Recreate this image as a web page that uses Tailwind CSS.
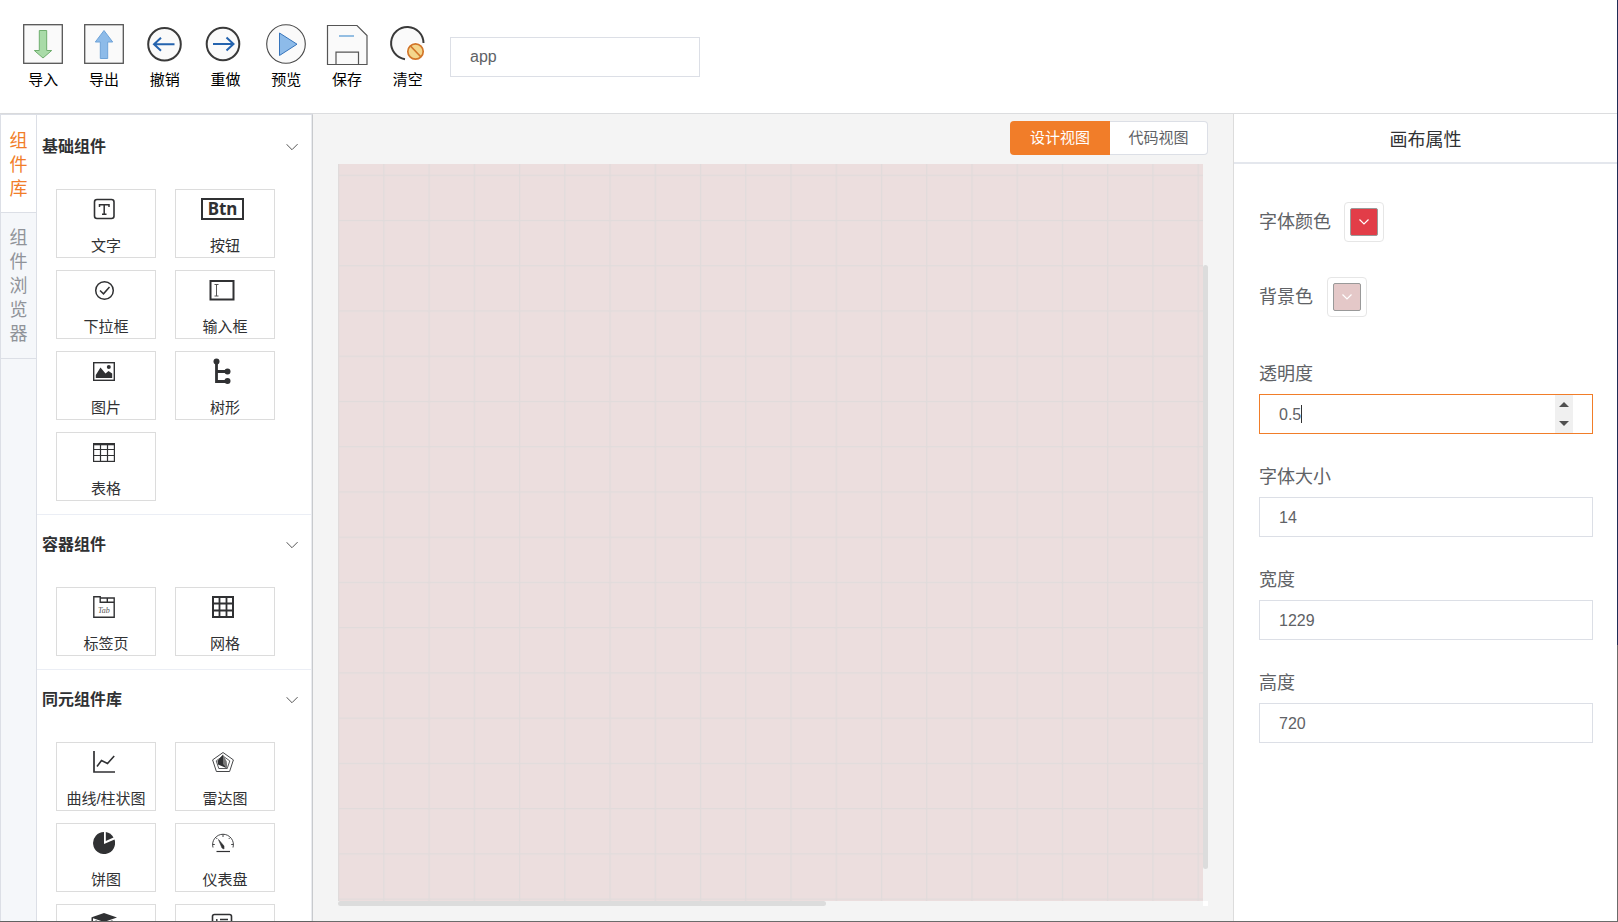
<!DOCTYPE html>
<html lang="zh-CN">
<head>
<meta charset="utf-8">
<meta name="viewport" content="width=device-width, initial-scale=1">
<title>app</title>
<script src="https://cdn.jsdelivr.net/npm/@tailwindcss/browser@4"></script>
</head>
<body class="h-screen overflow-hidden bg-[linear-gradient(#1f2d55_70%,#6b6b6b_70%)] pr-px pb-px font-['Liberation_Sans','Noto_Sans_CJK_SC',sans-serif] text-[#303133]">
<div class="flex h-full flex-col bg-white">

  <header class="flex h-[114px] shrink-0 items-start border-b border-[#dcdddf] pl-[13px]">
    <nav class="grid w-[425px] grid-cols-7 pt-6 text-[15px] leading-5 text-black" aria-label="工具栏">
      <button class="flex flex-col items-center gap-[6px]">
        <svg class="size-10" viewBox="0 0 40 40" fill="none"><rect x=".7" y=".7" width="38.6" height="38.6" fill="#fafafa" stroke="#555" stroke-width="1.3"/><path d="M16.3 6.5h7.4v20h5L20 34l-8.700-7.500h5z" fill="#a9dba8" stroke="#6fae6e"/></svg>
        导入
      </button>
      <button class="flex flex-col items-center gap-[6px]">
        <svg class="size-10" viewBox="0 0 40 40" fill="none"><rect x=".7" y=".7" width="38.6" height="38.6" fill="#fafafa" stroke="#555" stroke-width="1.3"/><path d="M16.300 34.500h7.400V18h5L20 6.500 11.300 18h5z" fill="#8dbbe9" stroke="#6ea3d8"/></svg>
        导出
      </button>
      <button class="flex flex-col items-center gap-[6px]">
        <svg class="size-10" viewBox="0 0 40 40" fill="none"><circle cx="19.500" cy="20.300" r="16.300" fill="#fafafa" stroke="#3a3a3a" stroke-width="2"/><path d="M29.500 20.300H9M16 13.800l-7 6.500 7 6.500" stroke="#2463ae" stroke-width="2"/></svg>
        撤销
      </button>
      <button class="flex flex-col items-center gap-[6px]">
        <svg class="size-10" viewBox="0 0 40 40" fill="none"><circle cx="18" cy="20" r="16.300" fill="#fafafa" stroke="#3a3a3a" stroke-width="2"/><path d="M8 20h20.500M21.500 13.500l7 6.500-7 6.500" stroke="#2463ae" stroke-width="2"/></svg>
        重做
      </button>
      <button class="flex flex-col items-center gap-[6px]">
        <svg class="size-10" viewBox="0 0 40 40" fill="none"><circle cx="20" cy="20" r="19.300" fill="#fafafa" stroke="#484848" stroke-width="1.100"/><path d="M13.500 9v22.500L31 20.200z" fill="#8dbbe9" stroke="#3674bb"/></svg>
        预览
      </button>
      <button class="flex flex-col items-center gap-[6px]">
        <svg class="size-10 overflow-visible" viewBox="0 0 40 40" fill="none"><path d="M.5 1.500h29.500l10 10v29H.5z" fill="#fafafa" stroke="#555" stroke-width="1.200"/><path d="M9 40V28.200h22.500V40" fill="#fafafa" stroke="#555" stroke-width="1.200"/><path d="M12 12H27" stroke="#88b7df" stroke-width="1.800"/></svg>
        保存
      </button>
      <button class="flex flex-col items-center gap-[6px]">
        <svg class="size-10" viewBox="0 0 40 40" fill="none"><circle cx="19.500" cy="19" r="16" fill="#fafafa"/><path d="M35.500 19A16.200 16.200 0 1 0 17 35.200" stroke="#3a3a3a" stroke-width="2"/><circle cx="27.500" cy="27.500" r="9.500" fill="#fff"/><circle cx="27.500" cy="27.500" r="7.700" fill="#f4d68c" stroke="#d2762a" stroke-width="1.700"/><path d="M22.500 22l10.500 11" stroke="#d2762a" stroke-width="1.700"/></svg>
        清空
      </button>
    </nav>
    <input aria-label="应用名称" value="app" class="mt-[37px] ml-3 h-10 w-[250px] border border-[#dcdfe6] px-[19px] text-base text-[#606266] outline-none">
  </header>

  <main class="flex min-h-0 flex-1">

    <aside class="flex w-[313px] shrink-0 border-x border-t border-[#dcdfe6] border-r-[#c8cacd] bg-white shadow-[0_2px_4px_rgba(0,0,0,0.12)]">
      <div class="flex w-9 shrink-0 flex-col border-r border-[#dcdfe6] bg-[#f5f7fa] text-lg leading-6" role="tablist">
        <button role="tab" aria-selected="true" class="border-b border-[#dcdfe6] bg-white px-2 pt-[14px] pb-[11px] text-[#f17d29]">组件库</button>
        <button role="tab" aria-selected="false" class="border-b border-[#dcdfe6] px-2 pt-[13px] pb-3 text-[#909399]">组件浏览器</button>
      </div>

      <div class="min-w-0 flex-1 overflow-hidden border-r border-[#e9ebef] text-[15px] leading-5">
        <section class="border-b border-[#ebeef5] pb-[13px]">
          <h2 class="pt-[2px]"><button class="flex h-[60px] w-full items-center justify-between pr-[13px] pl-[5px] text-base font-bold">基础组件
            <svg class="h-[7px] w-3" viewBox="0 0 12 7" fill="none" stroke="#555"><path d="M.4.1 6 5.700 11.600.1"/></svg></button></h2>
          <div class="grid grid-cols-[100px_100px] gap-x-[19px] gap-y-3 pt-3 pl-[19px]">
            <button class="flex h-[69px] flex-col items-center gap-4 border border-[#dcdcdc] pt-2">
              <svg class="mr-[5px] size-[22px] shrink-0" viewBox="0 0 22 22" fill="none" stroke="#303133"><rect x="1.500" y="1.500" width="19.500" height="19" rx="2.500" stroke-width="1.600"/><path d="M6.500 9V6.700h9.500V9M11.200 6.700v9.500M9 16.200h4.500" stroke-width="1.500"/></svg>文字</button>
            <button class="flex h-[69px] flex-col items-center gap-4 border border-[#dcdcdc] pt-2">
              <span class="mr-[5px] flex h-[22px] w-[43px] shrink-0 items-center justify-center border-2 border-[#303133] font-['Noto_Sans'] text-[17px] leading-4 font-bold">Btn</span>按钮</button>
            <button class="flex h-[69px] flex-col items-center gap-4 border border-[#dcdcdc] pt-2">
              <svg class="mr-[5px] size-[22px] shrink-0" viewBox="0 0 22 22" fill="none" stroke="#303133" stroke-width="1.500"><circle cx="11.500" cy="11.500" r="8.800"/><path d="M7 11.500l3.500 3.300 6-6.800"/></svg>下拉框</button>
            <button class="flex h-[69px] flex-col items-center gap-4 border border-[#dcdcdc] pt-2">
              <svg class="mr-[6px] h-[22px] w-[26px] shrink-0" viewBox="0 0 26 22" fill="none" stroke="#303133"><rect x="1.500" y="2" width="23" height="18.500" stroke-width="2"/><path d="M5.500 5.500h4M7.500 5.500v11.500M5.500 17h4" stroke="#555"/></svg>输入框</button>
            <button class="flex h-[69px] flex-col items-center gap-4 border border-[#dcdcdc] pt-2">
              <svg class="mr-[5px] size-[22px] shrink-0" viewBox="0 0 22 22" fill="#303133"><rect x=".7" y="2.700" width="20.600" height="17.600" fill="none" stroke="#303133" stroke-width="1.400"/><circle cx="15.800" cy="7" r="2"/><path d="M2.800 18v-3L7.500 7.500l5 6 3-2.500 3.700 2.500V18z"/></svg>图片</button>
            <button class="flex h-[69px] flex-col items-center gap-4 border border-[#dcdcdc] pt-2">
              <svg class="mr-[6px] size-[22px] shrink-0 overflow-visible" viewBox="0 0 22 22" fill="#303133"><path d="M5.500 1v20.500H16M5.500 11.500H16" fill="none" stroke="#303133" stroke-width="2.800"/><circle cx="5.500" cy="1.500" r="3"/><circle cx="16.500" cy="11.500" r="3"/><circle cx="16.500" cy="21" r="3"/></svg>树形</button>
            <button class="flex h-[69px] flex-col items-center gap-4 border border-[#dcdcdc] pt-2">
              <svg class="mr-[5px] size-[22px] shrink-0" viewBox="0 0 22 22" fill="none" stroke="#303133"><rect x=".6" y="2.600" width="20.800" height="17.800" stroke-width="1.200"/><path d="M0 3.200h22" stroke-width="2.200"/><path d="M1 8.500h20M1 14.500h20M7.500 3v17M14.500 3v17" stroke-width="1.200"/></svg>表格</button>
          </div>
        </section>

        <section class="border-b border-[#ebeef5] pb-[13px]">
          <h2><button class="flex h-[60px] w-full items-center justify-between pr-[13px] pl-[5px] text-base font-bold">容器组件
            <svg class="h-[7px] w-3" viewBox="0 0 12 7" fill="none" stroke="#555"><path d="M.4.1 6 5.700 11.600.1"/></svg></button></h2>
          <div class="grid grid-cols-[100px_100px] gap-x-[19px] gap-y-3 pt-3 pl-[19px]">
            <button class="flex h-[69px] flex-col items-center gap-4 border border-[#dcdcdc] pt-2">
              <svg class="mr-[5px] size-[22px] shrink-0" viewBox="0 0 22 22" fill="none" stroke="#303133"><path d="M.8.8h6.400v5.400h14v15H.8zM7.500 2h13.700v4.500M14.300 2v4" stroke-width="1.400"/><text x="5" y="17" font-family="Liberation Serif" font-style="italic" font-size="8" fill="#555" stroke="none">Tab</text></svg>标签页</button>
            <button class="flex h-[69px] flex-col items-center gap-4 border border-[#dcdcdc] pt-2">
              <svg class="mr-[5px] size-[22px] shrink-0" viewBox="0 0 22 22" fill="none" stroke="#303133"><rect x="1" y="1" width="20" height="20" stroke-width="2"/><path d="M1 7.500h20M1 14.500h20M7.500 1v20M14.500 1v20" stroke-width="1.800"/></svg>网格</button>
          </div>
        </section>

        <section>
          <h2><button class="flex h-[60px] w-full items-center justify-between pr-[13px] pl-[5px] text-base font-bold">同元组件库
            <svg class="h-[7px] w-3" viewBox="0 0 12 7" fill="none" stroke="#555"><path d="M.4.1 6 5.700 11.600.1"/></svg></button></h2>
          <div class="grid grid-cols-[100px_100px] gap-x-[19px] gap-y-3 pt-3 pl-[19px]">
            <button class="flex h-[69px] flex-col items-center gap-4 border border-[#dcdcdc] pt-2">
              <svg class="mr-[5px] size-[22px] shrink-0" viewBox="0 0 22 22" fill="none" stroke="#303133"><path d="M1 0v21h21" stroke-width="1.700"/><path d="M4 15.500l4.500-6 6 3L21.200 5" stroke-width="1.600"/></svg>曲线/柱状图</button>
            <button class="flex h-[69px] flex-col items-center gap-4 border border-[#dcdcdc] pt-2">
              <svg class="mr-[5px] size-[22px] shrink-0" viewBox="0 0 22 22" fill="none" stroke="#303133"><path d="M11 1.500l10.400 7.400L17.600 20.500H4.400L.6 8.900z" stroke-width=".9"/><path d="M11 5l6.800 4.900-2.600 7.600H6.800L4.200 9.900z" stroke-width=".8"/><path d="M11 3.500v9l4.500 5-9.500-4-.5-3.500z" fill="#303133"  stroke="none"/><path d="M11 3.500v9l4.500 5-.8-7z" fill="#777" stroke="none"/></svg>雷达图</button>
            <button class="flex h-[69px] flex-col items-center gap-4 border border-[#dcdcdc] pt-2">
              <svg class="mr-[5px] size-[22px] shrink-0" viewBox="0 0 22 22" fill="#303133"><path d="M11 0A11 11 0 1 0 21.500 7.500L11 12z"/><path d="M12.800 0A11 11 0 0 1 20.500 5.600L12.800 9z"/></svg>饼图</button>
            <button class="flex h-[69px] flex-col items-center gap-4 border border-[#dcdcdc] pt-2">
              <svg class="mr-[5px] size-[22px] shrink-0" viewBox="0 0 22 22" fill="none" stroke="#303133"><path d="M1 15.500A10.400 10.400 0 1 1 21 15.500M11 2.500V5M3.800 5.500l1.500 1.500M18.200 5.500l-1.500 1.500M.8 12.500h2M19.200 12.500h2" stroke-width=".9"/><path d="M6.500 7.500l5.500 6.500 0 3-2-1z" fill="#303133" stroke-width=".6"/><path d="M4.500 19.500h13.500" stroke-width="1.200"/></svg>仪表盘</button>
            <button aria-label="教学" class="flex h-[69px] flex-col items-center border border-[#dcdcdc] pt-2">
              <svg class="mr-[5px] h-[22px] w-[26px] shrink-0" viewBox="0 0 26 22" fill="#303133"><path d="M13 0l13 4.500-13 4.500L0 4.500z"/><path d="M4.500 7.200l8.500 3 8.500-3v7c-4 4-13 4-17 0zM.5 5h1.500v10H.5z"/></svg></button>
            <button aria-label="表单" class="flex h-[69px] flex-col items-center border border-[#dcdcdc] pt-2">
              <svg class="mr-[6px] size-[22px] shrink-0" viewBox="0 0 22 22" fill="none" stroke="#303133"><rect x="1.500" y="1.500" width="19" height="19.500" rx="2" stroke-width="1.600"/><path d="M5.800 6v11M9 6.500H17M9 9.500H17M9 13H17" stroke-width="1.400"/></svg></button>
          </div>
        </section>
      </div>
    </aside>

    <section class="flex min-w-0 flex-1 flex-col bg-[#f4f4f4] px-[25px] pt-[7px] pb-[15px]">
      <div class="flex h-[34px] shrink-0 self-end text-[15px]">
        <button class="w-[100px] rounded-l bg-[#f17d29] text-white">设计视图</button>
        <button class="w-[98px] rounded-r border border-l-0 border-[#dcdfe6] bg-white text-[#606266]">代码视图</button>
      </div>
      <div class="mt-[9px] grid min-h-0 flex-1 grid-cols-[1fr_5px] grid-rows-[1fr_5px]">
        <svg class="h-full w-full bg-[#ecdede]" aria-label="画布">
          <defs>
            <pattern id="major" width="45.240" height="45.240" y="10.700" patternUnits="userSpaceOnUse"><path d="M.6 0v45.240M0 .6h45.240" stroke="#dcdada" stroke-opacity=".7" stroke-width="1.200"/></pattern>
          </defs>
          <rect width="100%" height="100%" fill="url(#major)"/>
        </svg>
        <div class="flex flex-col pt-[101px] pb-8"><div class="flex-1 rounded-full bg-[#dcdcdc]"></div></div>
        <div class="flex"><div class="w-[488px] rounded-full bg-[#dcdcdc]"></div></div>
        <div class="bg-white"></div>
      </div>
    </section>

    <aside class="w-96 shrink-0 border-l border-[#dcdcdc] bg-white text-lg text-[#606266]">
      <h2 class="flex h-[50px] items-center justify-center border-b-2 border-[#e4e7ed] pt-[3px] text-[#303133]">画布属性</h2>
      <form class="pt-[38px] pr-6 pl-[25px]">
        <div class="flex h-10 items-center gap-[13px]">
          <span>字体颜色</span>
          <button type="button" aria-label="字体颜色" class="flex size-10 items-center justify-center rounded border border-[#e6e6e6]">
            <span class="flex size-7 items-center justify-center rounded-xs border border-[#999] bg-[#e23d48]"><svg class="h-[6px] w-[10px]" viewBox="0 0 10 6" fill="none" stroke="#fff" stroke-width="1.200"><path d="M.5.5 5 5 9.500.5"/></svg></span>
          </button>
        </div>
        <div class="mt-[35px] flex h-10 items-center gap-[14px]">
          <span>背景色</span>
          <button type="button" aria-label="背景色" class="flex size-10 items-center justify-center rounded border border-[#e6e6e6]">
            <span class="flex size-7 items-center justify-center rounded-xs border border-[#999] bg-[#e4c8c8]"><svg class="h-[6px] w-[10px]" viewBox="0 0 10 6" fill="none" stroke="#fff" stroke-width="1.200"><path d="M.5.5 5 5 9.500.5"/></svg></span>
          </button>
        </div>
        <div class="mt-[37px] flex flex-col gap-[23px]">
          <div>
            <label for="opacity" class="block leading-10">透明度</label>
            <div class="relative flex h-10 border border-[#f17d29]">
              <input id="opacity" value="0.5" class="min-w-0 flex-1 pt-px pl-[19px] text-base outline-none">
              <span class="absolute top-[10px] left-[41px] h-[18px] w-px bg-[#333]"></span>
              <div class="mr-[19px] flex w-[18px] flex-col bg-[#f0f0f0]">
                <button type="button" aria-label="增加" class="flex flex-1 items-center justify-center"><svg class="h-[5px] w-[10px]" viewBox="0 0 10 5"><path d="M0 5 5 0l5 5z" fill="#505050"/></svg></button>
                <button type="button" aria-label="减少" class="flex flex-1 items-center justify-center"><svg class="h-[5px] w-[10px]" viewBox="0 0 10 5"><path d="M0 0l5 5 5-5z" fill="#505050"/></svg></button>
              </div>
            </div>
          </div>
          <div>
            <label for="size" class="block leading-10">字体大小</label>
            <input id="size" value="14" class="block h-10 w-full border border-[#dcdfe6] px-[19px] pt-px text-base outline-none">
          </div>
          <div>
            <label for="width" class="block leading-10">宽度</label>
            <input id="width" value="1229" class="block h-10 w-full border border-[#dcdfe6] px-[19px] pt-px text-base outline-none">
          </div>
          <div>
            <label for="height" class="block leading-10">高度</label>
            <input id="height" value="720" class="block h-10 w-full border border-[#dcdfe6] px-[19px] pt-px text-base outline-none">
          </div>
        </div>
      </form>
    </aside>
  </main>
</div>
</body>
</html>
